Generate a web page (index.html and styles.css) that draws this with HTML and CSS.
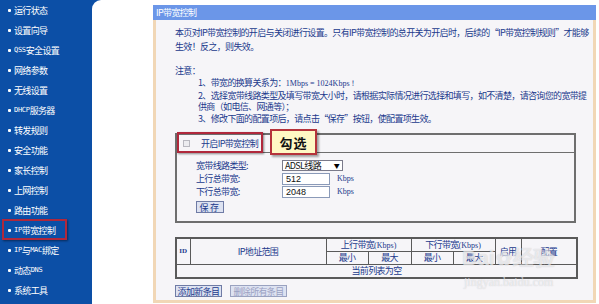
FILE: index.html
```html
<!DOCTYPE html>
<html lang="zh">
<head>
<meta charset="utf-8">
<title>IP带宽控制</title>
<link rel="stylesheet" href="styles.css">
</head>
<body>
<div class="page">
  <nav class="side">
    <div class="item"><span class="dot"></span>运行状态</div>
    <div class="item"><span class="dot"></span>设置向导</div>
    <div class="item"><span class="dot"></span><span class="lat">QSS</span>安全设置</div>
    <div class="item"><span class="dot"></span>网络参数</div>
    <div class="item"><span class="dot"></span>无线设置</div>
    <div class="item"><span class="dot"></span><span class="lat">DHCP</span>服务器</div>
    <div class="item"><span class="dot"></span>转发规则</div>
    <div class="item"><span class="dot"></span>安全功能</div>
    <div class="item"><span class="dot"></span>家长控制</div>
    <div class="item"><span class="dot"></span>上网控制</div>
    <div class="item"><span class="dot"></span>路由功能</div>
    <div class="item current"><span class="dot"></span><span class="lat">IP</span>带宽控制<span class="mark side-mark"></span></div>
    <div class="item"><span class="dot"></span><span class="lat">IP</span>与<span class="lat">MAC</span>绑定</div>
    <div class="item"><span class="dot"></span>动态<span class="lat">DNS</span></div>
    <div class="item"><span class="dot"></span>系统工具</div>
  </nav>
  <main class="main">
    <section class="panel">
      <div class="phead">IP带宽控制</div>
      <div class="pbody">
        <p class="intro">本页对IP带宽控制的开启与关闭进行设置。只有IP带宽控制的总开关为开启时，后续的“IP带宽控制规则”才能够<br>生效！反之，则失效。</p>
        <p class="note">注意：</p>
        <ul class="notes">
          <li>1、带宽的换算关系为：<span class="ser">1Mbps = 1024Kbps！</span></li>
          <li>2、选择宽带线路类型及填写带宽大小时，请根据实际情况进行选择和填写，如不清楚，请咨询您的宽带提</li>
          <li>供商（如电信、网通等）；</li>
          <li>3、修改下面的配置项后，请点击“保存”按钮，使配置项生效。</li>
        </ul>
        <div class="box">
          <div class="boxhead">
            <span class="cb"></span>
            <span class="cblabel">开启IP带宽控制</span>
            <span class="mark head-mark"></span>
            <span class="callout">勾选</span>
          </div>
          <div class="form">
            <div class="row"><span class="lbl">宽带线路类型:</span><span class="select">ADSL线路<span class="arrow">▼</span></span></div>
            <div class="row"><span class="lbl">上行总带宽:</span><span class="input">512</span><span class="unit">Kbps</span></div>
            <div class="row"><span class="lbl">下行总带宽:</span><span class="input">2048</span><span class="unit">Kbps</span></div>
            <span class="btn save">保存</span>
          </div>
        </div>
        <div class="tablewrap">
          <table class="rules">
            <colgroup>
              <col class="c-id"><col class="c-ip"><col class="c-n"><col class="c-n2"><col class="c-n"><col class="c-n"><col class="c-on"><col class="c-cfg">
            </colgroup>
            <tr class="r1">
              <th rowspan="2" class="idh">ID</th>
              <th rowspan="2">IP地址范围</th>
              <th colspan="2">上行带宽<span class="ser">(Kbps)</span></th>
              <th colspan="2">下行带宽<span class="ser">(Kbps)</span></th>
              <th rowspan="2">启用</th>
              <th rowspan="2">配置</th>
            </tr>
            <tr class="r2">
              <th>最小</th><th>最大</th><th>最小</th><th>最大</th>
            </tr>
            <tr class="r3">
              <td colspan="8">当前列表为空</td>
            </tr>
          </table>
          <div class="wm" aria-hidden="true">
            <div class="wm-big">Bai<span class="paw">✿</span>经验</div>
            <div class="wm-url">jingyan.baidu.com</div>
          </div>
        </div>
        <div class="btns">
          <span class="btn add">添加新条目</span>
          <span class="btn del">删除所有条目</span>
        </div>
      </div>
    </section>
  </main>
</div>
</body>
</html>
```
FILE: styles.css
```css
* { box-sizing: border-box; }
body {
  margin: 0;
  font-family: "Noto Sans CJK SC", "Noto Sans", sans-serif;
  font-size: 9px;
  letter-spacing: -0.65px;
}
.page {
  display: flex;
  height: 304px;
  background: #0c4fa6;
  overflow: hidden;
}
.side {
  width: 92px;
  flex: none;
  color: #fff;
}
.item {
  height: 20px;
  display: flex;
  align-items: center;
  padding-left: 8px;
  position: relative;
  white-space: nowrap;
}
.dot {
  width: 3px;
  height: 3px;
  background: #fff;
  margin-right: 3px;
  border-radius: 1px;
}
.lat { font-family: "DejaVu Sans Mono", monospace; font-size: 7px; letter-spacing: -0.3px; }
.mark {
  position: absolute;
  border: 2px solid #b0283c;
  box-shadow: 1px 1px 2px rgba(0,0,0,0.45);
}
.side-mark { left: 2px; top: -1px; width: 65px; height: 21px; }
.main {
  flex: 1;
  background: #fff;
  border-top-left-radius: 9px;
  padding: 5px 3px 0 61px;
}
.panel { width: 443px; }
.phead {
  height: 15px;
  line-height: 15px;
  background: #6b96e8;
  color: #fff;
  padding-left: 3px;
}
.pbody {
  background: #f6f5f8;
  border: 3px solid #f1d7b6;
  border-top: 0;
  padding: 6px 17px 3px 19px;
  color: #21398c;
}
.intro { margin: 0; line-height: 14px; white-space: nowrap; }
.note { margin: 11px 0 0; line-height: 12px; }
.notes {
  margin: 0;
  padding: 0 0 0 23px;
  list-style: none;
  line-height: 11.5px;
  white-space: nowrap;
}
.ser { font-family: "Liberation Serif", serif; font-size: 8px; letter-spacing: 0; }
.box {
  margin-top: 9px;
  border: 2px solid #6e6e6e;
}
.boxhead {
  height: 18px;
  border-bottom: 1px solid #6e6e6e;
  display: flex;
  align-items: center;
  position: relative;
}
.cb {
  width: 7px;
  height: 7px;
  margin-left: 6px;
  border: 1px solid #b8b8c0;
  background: #ececf0;
}
.cblabel { margin-left: 11px; }
.head-mark { left: 0; top: -3px; width: 86px; height: 21px; }
.callout {
  position: absolute;
  left: 93px;
  top: -6px;
  width: 47px;
  height: 26px;
  background: #fff8c4;
  border: 2px solid #b5333b;
  box-shadow: 2px 2px 2px rgba(0,0,0,0.35);
  color: #111;
  font-size: 13px;
  font-weight: bold;
  letter-spacing: 1px;
  display: flex;
  align-items: center;
  justify-content: center;
}
.form { padding: 6px 0 7px 19px; }
.row { display: flex; align-items: center; height: 13px; }
.lbl { width: 86px; white-space: nowrap; }
.select {
  width: 61px;
  height: 11px;
  border: 1px solid #7a7a8a;
  background: #fff;
  color: #111;
  display: flex;
  align-items: center;
  justify-content: space-between;
  padding: 0 3px 0 2px;
  font-size: 9px;
  white-space: nowrap;
}
.arrow { font-size: 6px; color: #000; }
.input {
  width: 48px;
  height: 12px;
  border: 1px solid #8a9ab8;
  background: #fff;
  color: #111;
  font-family: "Liberation Sans", sans-serif;
  font-size: 9px;
  letter-spacing: 0;
  padding-left: 3px;
  line-height: 10px;
}
.unit {
  margin-left: 7px;
  font-family: "Liberation Serif", serif;
  font-size: 8px;
  letter-spacing: 0;
}
.btn {
  display: inline-flex;
  align-items: center;
  justify-content: center;
  height: 12px;
  background: #dde2f1;
  border: 1px solid #6f7ba5;
  color: #21398c;
  white-space: nowrap;
}
.save { width: 28px; margin-top: 3px; letter-spacing: 1.5px; }
.tablewrap { position: relative; margin-top: 14px; }
.rules {
  width: 401px;
  border-collapse: collapse;
  table-layout: fixed;
  border: 2px solid #5a5a5a;
}
.c-id { width: 14px; }
.c-ip { width: 136px; }
.c-n { width: 42px; }
.c-n2 { width: 43px; }
.c-on { width: 26px; }
.c-cfg { width: 56px; }
.rules th, .rules td {
  border: 1px solid #5a5a5a;
  font-weight: normal;
  text-align: center;
  padding: 0;
  line-height: 11px;
  white-space: nowrap;
  color: #21398c;
}
.rules .r1 th, .rules .r2 th { height: 13px; }
.rules .r3 td { height: 14px; }
.idh { font-family: "Liberation Serif", serif; font-size: 7px; font-weight: bold !important; letter-spacing: 0; }
.wm {
  position: absolute;
  left: 287px;
  top: 8px;
  color: rgba(255,255,255,0.6);
  text-shadow: 0 0 1px rgba(120,120,130,0.4);
  pointer-events: none;
}
.wm-big {
  font-family: "Liberation Sans", sans-serif;
  font-size: 21px;
  font-weight: bold;
  letter-spacing: 0;
  line-height: 26px;
  white-space: nowrap;
}
.paw { font-size: 19px; margin: 0 1px; }
.wm-url {
  font-family: "Liberation Serif", serif;
  font-size: 12px;
  letter-spacing: 0;
  margin-top: 3px;
  padding-left: 2px;
}
.btns { display: flex; gap: 8px; margin-top: 6px; }
.add { width: 47px; }
.del { width: 57px; color: #9aa0c2; border-color: #9aa2c0; }
```
